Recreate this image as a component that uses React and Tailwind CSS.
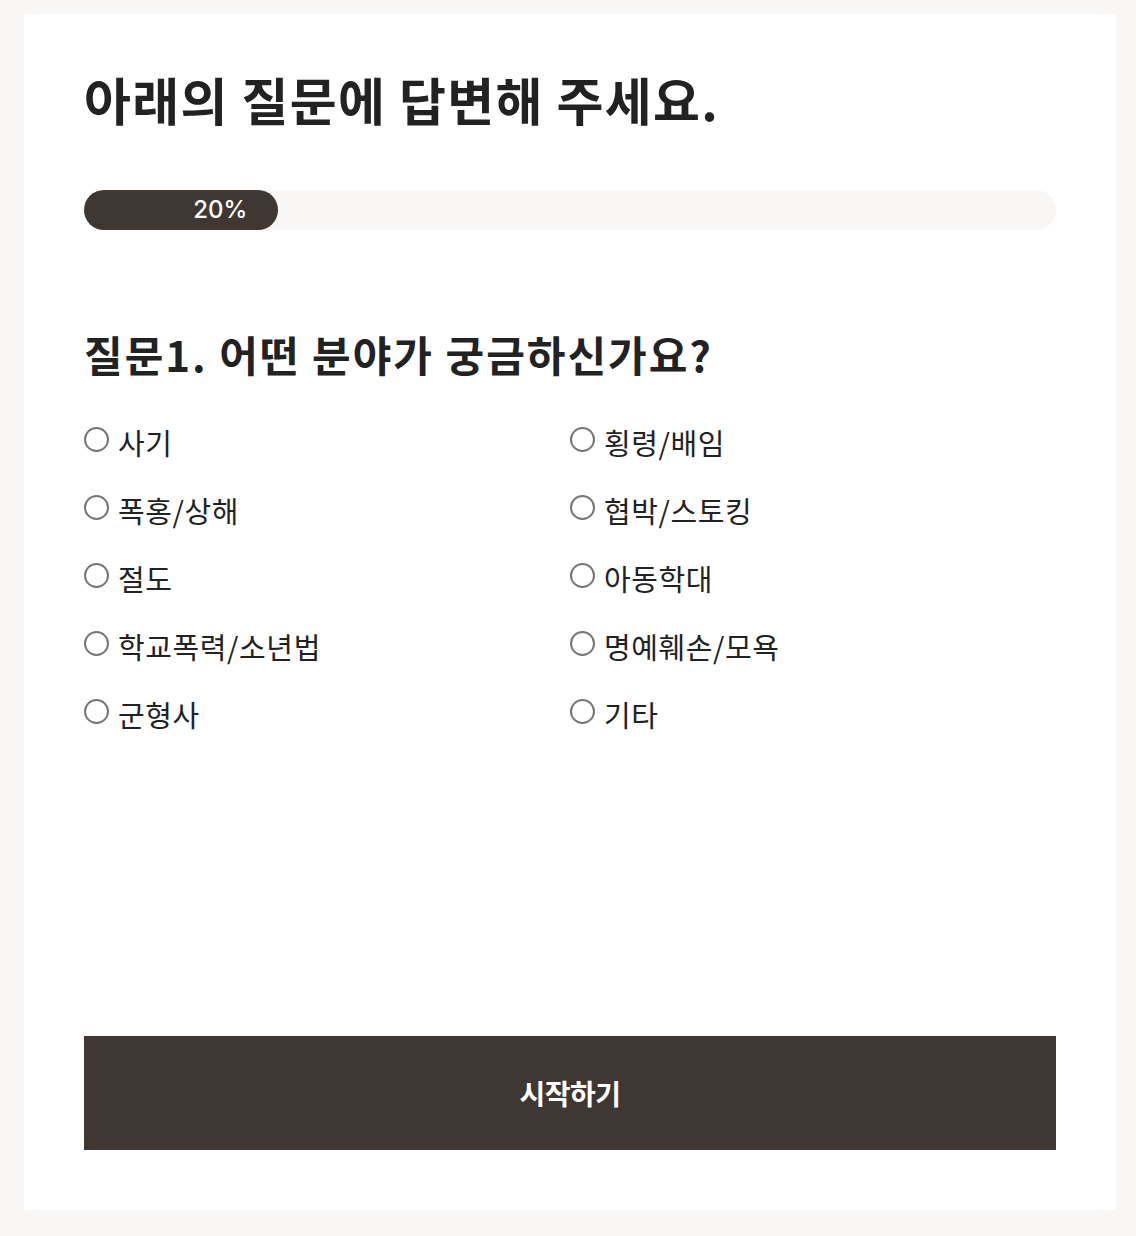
import React, { useState } from 'react';

const options = [
    '사기', '횡령/배임',
    '폭홍/상해', '협박/스토킹',
    '절도', '아동학대',
    '학교폭력/소년법', '명예훼손/모욕',
    '군형사', '기타',
];

const App = () => {
    const [selected, setSelected] = useState(null);
    const progress = 20;

    return (
        <div className="min-h-[1236px] bg-[#f8f7f5] pt-[14px] pb-[26px] pl-[24px] pr-[20px] font-['Noto_Sans_CJK_KR','Noto_Sans',sans-serif] text-[#222222]">
            <div className="flex min-h-[1196px] flex-col bg-white px-[60px] pt-[55px] pb-[60px]">
                <h1 className="text-[51px] font-bold leading-[1.2] tracking-[1.3px]">아래의 질문에 답변해 주세요.</h1>

                {/* Progress bar */}
                <div className="mt-[60px] h-[40px] w-full rounded-full bg-[#f8f7f5]">
                    <div
                        className="flex h-full items-center justify-end rounded-full bg-[#3f3731] pr-[31px]"
                        style={{ width: `${progress}%` }}
                    >
                        <span className="font-['Inter',sans-serif] text-[24px] font-medium leading-none text-white">{progress}%</span>
                    </div>
                </div>

                <h2 className="mt-[99px] text-[42px] font-bold leading-[1.2] tracking-[2px]">질문1. 어떤 분야가 궁금하신가요?</h2>

                <div className="mt-[43px] grid grid-cols-2 gap-y-[28px]">
                    {options.map((opt) => (
                        <label key={opt} className="flex h-[40px] cursor-pointer items-center" onClick={() => setSelected(opt)}>
                            <span className="mb-[6px] flex h-[25px] w-[25px] shrink-0 items-center justify-center rounded-full border-2 border-[#767676] bg-white">
                                {selected === opt && <span className="h-[13px] w-[13px] rounded-full bg-[#3f3731]" />}
                            </span>
                            <span className="ml-[9px] text-[29px] leading-none tracking-[0.6px] text-[#222222]">{opt}</span>
                        </label>
                    ))}
                </div>

                <div className="flex-1" />

                <button className="h-[114px] w-full bg-[#3f3731] text-[28px] font-bold tracking-[-0.5px] text-white">
                    시작하기
                </button>
            </div>
        </div>
    );
};

export default App;
